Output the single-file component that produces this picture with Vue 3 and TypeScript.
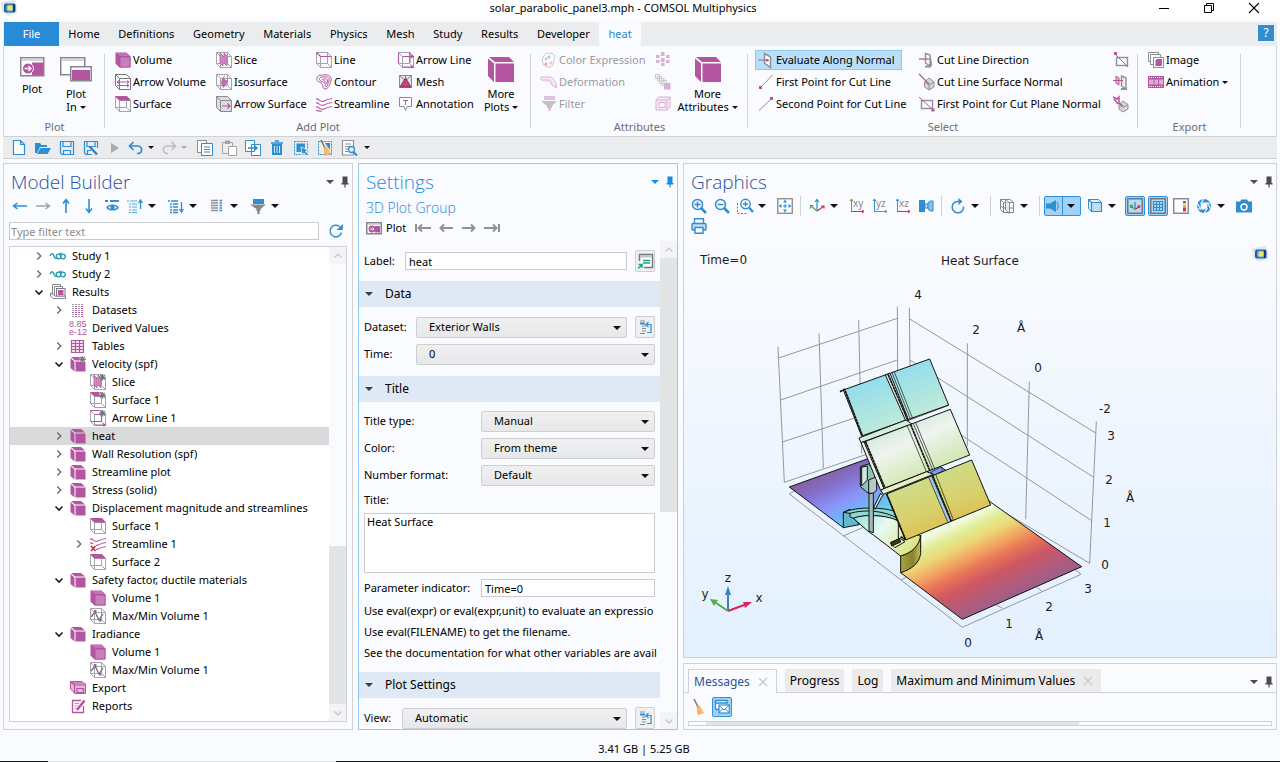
<script setup lang="ts">
import { h, ref } from 'vue'

const M = '#b455a0'
const G = '#8f9094'
const B = '#2f8dd0'

const wire = `<path d="M.5 .5H11.5L15.5 4.5V15.5H4.5L.5 11.5ZM.5 .5L4.5 4.5H15.5M4.5 4.5V15.5M11.5 .5V11.5H.5M11.5 11.5L15.5 15.5" fill="none" stroke="#a4a5a8"/>`
const solid = `<path d="M1 1H11L15 4.5H5ZM.5 2L4.5 5.5V15.5L.5 12ZM5.5 5.5H15.5V15.5H5.5Z" fill="${M}"/>`
const star = `<path d="M12.500 0V6.500M9.300 3.300H15.800M10.200 1L14.800 5.600M14.800 1L10.200 5.600" stroke="#77787c" stroke-width="1.200"/>`
const waves = `<path d="M0 3C3 2 4 7 8 5S12 3 16 2.500M0 7C3 6 4 11 8 9S12 7 16 6.500M0 11C3 10 4 15 8 13S12 11 16 10.500M0 14.500C2 14 4 16 6 15" fill="none" stroke="${M}" stroke-width="1.100"/>`
const page = (x: number, y: number, c: string, w = 9, hh = 11) => `<rect x="${x}.5" y="${y}.5" width="${w}" height="${hh}" fill="#fafbff" stroke="${c}"/>`
const zoomGlass = `<circle cx="6.500" cy="6.500" r="5" fill="none" stroke="${B}" stroke-width="1.500"/><path d="M10 10L15 15" stroke="${B}" stroke-width="2.500"/>`
const plane = (a: string, b: string) => `<path d="M2.500 14V1M1 3L2.500 1L4 3" fill="none" stroke="${a}"/><path d="M2.500 13.500H15M13 12L15 13.500L13 15" fill="none" stroke="${b}"/>`
const letter = (t: string) => `<text x="4" y="9" font-family="Noto Sans, sans-serif" font-size="10" fill="#8a8a8e">${t}</text>`
const axes3 = `<path d="M8 12V2M6 4L8 1.500L10 4" fill="none" stroke="${B}" stroke-width="1.200"/><path d="M8 13L2 8M1.500 10.500V7.500H4.500" fill="none" stroke="#4da84a" stroke-width="1.200"/><path d="M8 13L14.500 8.500M12 8H15V10.500" fill="none" stroke="#d8285c" stroke-width="1.200"/>`
const broom = `<path d="M4 0L8 8" stroke="#77787c" stroke-width="1.600"/><path d="M6.500 7L9.500 6.500L14 14L8 16Z" fill="#f2a74b"/><path d="M8 9L11 15M9.500 8L12.500 14" stroke="#fbd79c" stroke-width=".8"/>`
const logo = `<path d="M0 2.500L5 1L14 0L16 6V13L7 16L1 12Z" fill="#e3e5ea"/><rect x="3" y="3.500" width="11.500" height="9" rx="2" fill="#2257b4"/><rect x="5" y="4.500" width="8" height="7" rx="2" fill="#49b5c8"/><rect x="6.500" y="5.500" width="5" height="5" rx="1.500" fill="#f2e35a"/><path d="M12 4H14V12H12Z" fill="#153a80"/>`

const icons: Record<string, string> = {
  volume: `<path d="M.5 .5H11.500L15.500 4.500V15.500H4.500L.5 11.500Z" fill="${M}"/><path d="M5 5H15V15H5Z" fill="#c780b9" stroke="${M}"/><path d="M2 1L11.300 1L14 4H5Z" fill="#c275b3"/>`,
  arrowVolume: `<path d="M.5 .5H11.500L15.500 4.500V15.500H4.500L.5 11.500ZM.5 .5L4.500 4.500H15.500M4.500 4.500V15.500" fill="none" stroke="#77787c"/><path d="M2 8H14M2 11.500H14M12 6.500L14 8L12 9.500M12 10L14 11.500L12 13M4 6.500L2 8L4 9.500" fill="none" stroke="${M}"/>`,
  surface: `${wire}<path d="M0 0H12L16 4.500H4.500Z" fill="${M}"/>`,
  slice: `${wire}<path d="M4 1L7 4V14L4 11ZM8 1L11 4V14L8 11Z" fill="#cf8fc3" stroke="${M}" stroke-width=".8"/>`,
  isosurface: `${wire}<path d="M9 1L8 5L12 7L10 11L7 14L5 9L6 5Z" fill="${M}" opacity=".85"/>`,
  arrowSurface: `<path d="M.5 .5H11.500L15.500 4.500V15.500H4.500L.5 11.500Z" fill="#dcdde0" stroke="#8a8b8f"/><path d="M.5 .5L4.500 4.500H15.500M4.500 4.500V15.500" fill="none" stroke="#8a8b8f"/><path d="M6 10H14M11.500 7.500L14 10L11.500 12.500" fill="none" stroke="${M}" stroke-width="1.200"/>`,
  line: `${wire}<path d="M.5 .5L4.500 4.500H15.500" fill="none" stroke="${M}" stroke-width="1.200"/>`,
  contour: `<path d="M8 1C13 0 16 3 15 7S12 15 9 15S8 11 5 9S0 7 1 4S4 1 8 1ZM8 3C12 2 14 4 13 7S11 13 10 13S10 9 7 8S3 6 3.500 4.500S5 3 8 3ZM8 5C10 4.500 12 5 11.500 7S11 10 10.500 10S10 7.500 8 6.500S6 5.500 8 5Z" fill="none" stroke="${M}"/>`,
  streamline: waves,
  arrowLine: `${wire}<path d="M.5 1V11M4.500 4.500H15M4.500 15H15M13 3L15.500 4.500L13 6M13 13.500L15.500 15L13 16M12 0V11" fill="none" stroke="${M}" stroke-width="1.100"/>`,
  mesh: `<rect x="1.500" y="1.500" width="12" height="12" fill="#e3e3e6" stroke="#8a8b8f"/><path d="M1.500 1.500L7.500 7L13.500 1.500M7.500 1.500V7" fill="none" stroke="#8a8b8f"/><path d="M7.500 4L13 13H2Z" fill="#c8447e" stroke="#8e2f60"/>`,
  annotation: `<path d="M1.500 1.500H13.500V10.500H9L7.500 14.500L6 10.500H1.500Z" fill="#fff" stroke="#8a8b8f"/><path d="M5 4.500H10M7.500 4.500V9" stroke="${M}" fill="none"/>`,
  bigCube: `<path d="M1 0H21L26 5H7ZM0 1.500L6 6.500V25L0 19ZM7.500 6.500H26V25H7.500Z" fill="${M}"/>`,
  plotBig: `<rect x=".75" y=".75" width="23" height="18" fill="#fff" stroke="#85868a" stroke-width="1.500"/><path d="M1.500 1.500H23V4H1.500Z" fill="#d4d5d8"/><path d="M12 5.500H23V18H12Z" fill="${M}"/><circle cx="8" cy="11.500" r="5.500" fill="${M}" stroke="#fff"/><path d="M4.500 11.500H11M8.500 9L11 11.500L8.500 14" fill="none" stroke="#fff" stroke-width="1.300"/>`,
  plotIn: `<rect x=".75" y=".75" width="24" height="17" fill="#fff" stroke="#85868a" stroke-width="1.500"/><path d="M1.500 1.500H24V4H1.500Z" fill="#d4d5d8"/><rect x="10.750" y="9.750" width="20.500" height="14" fill="#fff" stroke="#85868a" stroke-width="1.500"/><path d="M12 13H30V23H12Z" fill="${M}"/>`,
  palette: `<path d="M8 1C13 1 15 4 13 7C12 9 14 11 11 14C7 17 1 14 1.500 8C2 4 4 1 8 1Z" fill="#fafafa" stroke="#8f9094"/><circle cx="8" cy="5" r="1.500" fill="#3f8fd0"/><circle cx="5" cy="7" r="1.300" fill="#888"/><circle cx="5" cy="12" r="1.500" fill="#d33"/><circle cx="10" cy="11" r="1.500" fill="#e9903a"/>`,
  deform: `<path d="M0 3H9C13 4 15 8 15.500 14M0 6H8C10 7 11 10 11 11L15.500 14M0 3V6" fill="#f3d9ee" stroke="${M}"/>`,
  filterG: `<path d="M3 0H14V4H3Z" fill="${M}" opacity=".8"/><path d="M0 5H16L11 10V12H6V10Z" fill="#7d7e82"/><path d="M8.500 12V15" stroke="${M}" stroke-width="2"/>`,
  grid3: `<path d="M6 0H9.500V4H6ZM1 3H4.500V6H1ZM11 3H14.500V6H11ZM6 6H9.500V10H6ZM1 8H4.500V11H1ZM11 8H14.500V11H11ZM6 11H9.500V14H6Z" fill="${M}"/>`,
  stack: `<path d="M.5 .5H4.500V4.500H.5ZM2.500 2.500H6.500V7H2.500ZM4.500 4.500H9V9.500H4.500ZM7 6.500H11.500V11.500H7Z" fill="#eee" stroke="#8a8b8f"/><path d="M9 9H15.500V15.500H9Z" fill="${M}"/>`,
  boxes: `<path d="M1 4L4 1H15V11L12 14H1ZM1 4H12V14M12 4L15 1" fill="#f1d8ec" stroke="${M}"/><rect x="4" y="6.500" width="6" height="5" fill="#fff" stroke="${M}"/>`,
  normal: `<path d="M6.500 1.500L12.500 5V15.500L6.500 11Z" fill="#fff" stroke="${G}" stroke-width="1.500"/><path d="M0 8H8" stroke="#77787c"/><path d="M8 7H10.500V9.500H8Z" fill="${M}"/>`,
  first: `<path d="M3 13L14.500 1" stroke="${G}"/><path d="M1 12H4V15H1Z" fill="${M}"/>`,
  second: `<path d="M1 14.500L13 3" stroke="${G}"/><path d="M12 1H15V4H12Z" fill="${M}"/>`,
  dir: `<path d="M6.500 1.500L11 3V14L6.500 11ZM11 3L12.500 14" fill="#fff" stroke="${G}" stroke-width="1.400"/><path d="M0 7H10" stroke="${M}" stroke-width="1.300"/><path d="M6 14.500H12" stroke="${G}" stroke-width="2"/>`,
  surfN: `<path d="M10 4L15 8V13L10 16L5.500 13V8Z" fill="#d6d7da" stroke="${G}"/><path d="M5.500 8L10 11L15 8M10 11V16" stroke="${G}" fill="none"/><path d="M0 0L10 10" stroke="${M}" stroke-width="1.300"/>`,
  planeN: `<rect x="2.500" y="4.500" width="11" height="8" fill="none" stroke="${G}" stroke-width="1.400"/><path d="M0 1L14 14" stroke="${M}"/><path d="M12.500 12.500H15.500V15.500H12.500Z" fill="${M}"/>`,
  planeA: `<rect x="3.500" y="5.500" width="11" height="8" fill="none" stroke="${G}" stroke-width="1.400"/><path d="M2 2L15 15" stroke="${M}"/><path d="M1 0H4V3H1Z" fill="${M}"/>`,
  planeB: `<path d="M8.500 2L13 4V15L8.500 12Z" fill="#eee" stroke="${G}" stroke-width="1.400"/><path d="M3 2L6 4V11L3 9ZM0 6.500H10" stroke="${M}" fill="#e3b5da"/><path d="M8 15H14" stroke="${G}" stroke-width="2"/>`,
  planeC: `<path d="M10 5L15 8.500V13L10 16L6 13V8.500Z" fill="#d6d7da" stroke="${G}"/><path d="M6 8.500L10 11.500L15 8.500" stroke="${G}" fill="none"/><path d="M0 1L4 3L6 1V7L10 10M1 3L5 8" fill="none" stroke="${M}" stroke-width="1.500"/>`,
  image: `${page(0, 0, G, 10, 9)}${page(2, 2, G, 10, 10)}${page(5, 5, G, 10, 10)}<path d="M7.500 8L9 7H14V13L12.500 14H7.500Z" fill="${M}"/>`,
  film: `<path d="M0 2H16V14H0Z" fill="${M}"/><path d="M1 5.500H5.500V10.500H1ZM6.500 5.500H10V10.500H6.500ZM11 5.500H15V10.500H11Z" fill="#dcb0d3"/><path d="M1 3.500H15M1 12.500H15" stroke="#fff" stroke-dasharray="1 1"/>`,
  newF: `<path d="M2.500 .5H9.500L13.500 4.500V14.500H2.500ZM9.500 .5V4.500H13.500" fill="#fff" stroke="${B}" stroke-width="1.200"/>`,
  open: `<path d="M0 3H5L6.500 5H12V7H5L2 13H0Z" fill="${B}"/><path d="M5.500 8H16L12.500 14H2Z" fill="${B}"/>`,
  save: `<path d="M1.500 1.500H14.500V14.500H3L1.500 13ZM4 1.500V6.500H12V1.500M4.500 14V10.500H11.500V14" fill="none" stroke="${B}" stroke-width="1.200"/>`,
  saveAs: `<path d="M14.500 8V1.500H1.500V13L3 14.500H9M4 1.500V6.500H12V1.500M4.500 14V10.500H8" fill="none" stroke="${B}" stroke-width="1.200"/><path d="M6.500 6.500L14 14.500" stroke="#3f7fb0" stroke-width="2.500"/>`,
  play: `<path d="M4 3L12 8L4 13Z" fill="#a9aaad"/>`,
  undo: `<path d="M1.500 6H10C15 6 15 14 9 13.500M5.500 2L1.500 6L5.500 10" fill="none" stroke="${B}" stroke-width="1.700"/>`,
  redo: `<path d="M14.500 6H6C1 6 1 14 7 13.500M10.500 2L14.500 6L10.500 10" fill="none" stroke="#bbbcc0" stroke-width="1.500"/>`,
  copy: `${page(0, 0, G, 9, 12)}<path d="M4.500 3.500H15.500V15.500H4.500Z" fill="#fff" stroke="${B}"/><path d="M7 7H13M7 9.500H13M7 12H13" stroke="${B}"/>`,
  paste: `<path d="M1.500 2.500H11.500V13.500H1.500Z" fill="#eee" stroke="#a2a3a6"/><path d="M4 .5H9V4H4Z" fill="#a2a3a6"/><path d="M7.500 6.500H15.500V15.500H7.500Z" fill="#fff" stroke="#a2a3a6"/>`,
  dup: `<path d="M.5 .5H9.500V11.500H.5ZM6.500 4.500H15.500V15.500H6.500Z" fill="#fff" stroke="${B}"/><path d="M3 8H12M9 5.500L12 8L9 10.500" fill="none" stroke="${B}" stroke-width="1.600"/>`,
  trash: `<path d="M3 4H13V15H3Z" fill="${B}"/><path d="M2 3H14M6 1H10" stroke="${B}" stroke-width="1.600"/><path d="M5.500 6V13M8 6V13M10.500 6V13" stroke="#cfe4f5"/>`,
  sel: `<rect x="1.500" y="1.500" width="13" height="13" fill="none" stroke="${B}" stroke-dasharray="2 1"/><path d="M3.500 3.500H12V12H3.500Z" fill="${B}"/><path d="M8 7L9 15L11 13L14 16L15.500 14.500L12.500 11.500L15 10Z" fill="${B}" stroke="#fff" stroke-width=".7"/>`,
  clear: `<rect x="1.500" y="1.500" width="13" height="13" fill="none" stroke="${B}" stroke-dasharray="2 1"/><path d="M8 3H13V10Z" fill="${B}"/>${broom}`,
  find: `<path d="M1.500 .5H12.500V15H1.500Z" fill="#fff" stroke="${G}" stroke-width="1.200"/><path d="M4 4H10M4 6.500H9M4 9H7M4 11.500H7" stroke="${G}"/><circle cx="10.500" cy="9.500" r="3" fill="#e6f1fb" stroke="${B}" stroke-width="1.300"/><path d="M12.500 12L16 15.500" stroke="${B}" stroke-width="2"/>`,
  left: `<path d="M1 8H15M5.500 5L1.500 8L5.500 11" fill="none" stroke="${B}" stroke-width="1.500"/>`,
  right: `<path d="M1 8H15M10.500 5L14.500 8L10.500 11" fill="none" stroke="#a3a4a8" stroke-width="1.500"/>`,
  up: `<path d="M8 15V2M5 5.500L8 1.500L11 5.500" fill="none" stroke="${B}" stroke-width="1.600"/>`,
  down: `<path d="M8 1V14M5 10.500L8 14.500L11 10.500" fill="none" stroke="${B}" stroke-width="1.600"/>`,
  eye: `<path d="M1 3H4M6 3H15" stroke="${B}" stroke-width="1.800"/><path d="M3 9.500C5 6.500 12 6.500 14 9.500C12 12.500 5 12.500 3 9.500Z" fill="none" stroke="${B}" stroke-width="1.400"/><circle cx="8.500" cy="9.500" r="2" fill="${B}"/>`,
  listUp: `<path d="M0 3H2M3 3H10M2 6H4M5 6H10M2 9H4M5 9H10M2 12H4M5 12H10M2 14.500H4M5 14.500H10" stroke="${B}" stroke-width="1.200" opacity=".8"/><path d="M13.500 11V3M11.500 5L13.500 2L15.500 5" fill="none" stroke="${B}" stroke-width="1.300"/>`,
  listDown: `<path d="M0 3H2M3 3H10M2 6H4M5 6H10M2 9H4M5 9H10M2 12H4M5 12H10M2 14.500H4M5 14.500H10" stroke="${B}" stroke-width="1.300"/><path d="M13.500 4V13M11.500 11L13.500 14L15.500 11" fill="none" stroke="${B}" stroke-width="1.300"/>`,
  columns: `<path d="M2 2.500H9M2 5H9M2 7.500H9M2 10H9M2 12.500H9" stroke="#8f9094" stroke-width="1.400"/><path d="M10.500 2.500H13M10.500 5H13M10.500 7.500H13M10.500 10H13M10.500 12.500H13" stroke="${B}" stroke-width="1.400"/>`,
  funnel: `<path d="M3 1H14V6H3Z" fill="${B}"/><path d="M0 6.500H16L10.500 11V13H6.500V11Z" fill="#86878b"/><path d="M8.500 13V16" stroke="${B}" stroke-width="2"/>`,
  refresh: `<path d="M13.500 9.500A5.800 5.800 0 1 1 11.500 3.500" fill="none" stroke="${B}" stroke-width="1.500"/><path d="M14.800 1V7H8.500Z" fill="${B}"/>`,
  study: `<path d="M0 8C1.500 5 3 5 4 8S6 11 7 9" fill="none" stroke="#2596b4" stroke-width="1.300"/><circle cx="8.500" cy="8.500" r="2.300" fill="none" stroke="#2596b4" stroke-width="1.300"/><circle cx="13" cy="8.500" r="2.300" fill="none" stroke="#2596b4" stroke-width="1.300"/><path d="M9 5.500L12 5" stroke="#2596b4"/>`,
  results: `<path d="M.5 9V12L3 14.500H15.500V12H5L.5 9" fill="none" stroke="#85868a"/><path d="M2.500 10V.5H10.500V2M4.500 11V2.500H12.500V4" fill="none" stroke="#85868a"/><rect x="6.500" y="4.500" width="8.500" height="7.500" fill="#fff" stroke="#77787c"/><path d="M8 6H13.500V11H8Z" fill="${M}"/>`,
  datasets: `<path d="M3 2V15M6 2V15M9 2V15M12 2V15" stroke="#9a9b9f" stroke-width="2" stroke-dasharray="1 1"/><path d="M6 4V15M12 4V15" stroke="${M}" stroke-width="2" stroke-dasharray="1 1"/><path d="M2 10.500H13" stroke="${M}" stroke-dasharray="2 1"/>`,
  derived: `<text x="-1" y="7" font-family="Liberation Sans, sans-serif" font-size="9" fill="${M}">8.85</text><text x="-1" y="15" font-family="Liberation Sans, sans-serif" font-size="9" fill="${M}">e-12</text>`,
  table: `<path d="M1.500 2.500H13.500V14.500H1.500ZM1.500 5.500H13.500M1.500 8.500H13.500M1.500 11.500H13.500M5.500 2.500V14.500M9.500 2.500V14.500" fill="#f4e4f1" stroke="${M}" stroke-width="1.200"/>`,
  cube: solid,
  cubeStar: solid + `<rect x="9.500" y="0" width="6.500" height="6" fill="#fff" opacity=".7"/>` + star,
  sliceStar: `${wire}<path d="M4 1L7 4V14L4 11ZM8 1L11 4V14L8 11Z" fill="#cf8fc3" stroke="${M}" stroke-width=".8"/>${star}`,
  surfStar: `${wire}<path d="M0 0H9L10 4.500H4.500Z" fill="${M}"/>${star}`,
  lineStar: `${wire}<path d="M.5 .5H9M4.500 4.500H10M.5 11.500H11.500V6M4.500 15H15M13 13.500L15.500 15L13 16" fill="none" stroke="${M}" stroke-width="1.100"/>${star}`,
  streamX: waves + `<path d="M0 8H6V16H0Z" fill="#fff"/><path d="M1 10L5.500 15M5.500 10L1 15" stroke="#d2262f" stroke-width="1.500"/>`,
  maxmin: `${wire}<path d="M1 9L5 4L9 12L13 6" fill="none" stroke="#6f7074" stroke-width="1.300"/><path d="M4 2H6.500V4.500H4ZM9 11H11.500V13.500H9Z" fill="${M}"/>`,
  export: `<path d="M.5 1.500H11.500L15.500 4V13.500H5L.5 9Z" fill="#e3b9da" stroke="${M}"/><path d="M.5 1.500L4.500 5H15.500M4.500 5V13.500M3 3H13M7 8.500H13.500V12.500H7Z" fill="none" stroke="${M}" stroke-width="1.200"/>`,
  report: `<path d="M13.500 8V14.500H2.500V2.500H11" fill="#fff" stroke="${M}" stroke-width="1.300"/><path d="M4.500 5.500H9M4.500 8H8M4.500 10.500H6.500" stroke="#c98abd"/><path d="M14.500 2.500L7 12" stroke="${M}" stroke-width="2.500"/>`,
  plotS: `<rect x=".75" y="2.750" width="14.500" height="11" fill="#fff" stroke="#85868a" stroke-width="1.500"/><path d="M2 4H14V5H2Z" fill="#d4d5d8"/><path d="M9 6H14V12.500H9Z" fill="${M}"/><circle cx="6" cy="9" r="3.500" fill="${M}"/><path d="M4 9H8M6.500 7.500L8 9L6.500 10.500" fill="none" stroke="#fff"/>`,
  goFirst: `<path d="M1 4V12M3 8H16M7 4.500L3.500 8L7 11.500" fill="none" stroke="#909194" stroke-width="2"/>`,
  goPrev: `<path d="M2 8H15M6 4.500L2.500 8L6 11.500" fill="none" stroke="#909194" stroke-width="2"/>`,
  goNext: `<path d="M1 8H14M10 4.500L13.500 8L10 11.500" fill="none" stroke="#909194" stroke-width="2"/>`,
  goLast: `<path d="M15 4V12M0 8H13M9 4.500L12.500 8L9 11.500" fill="none" stroke="#909194" stroke-width="2"/>`,
  rename: `<path d="M2.500 8V1.500H15.500V14.500H7" fill="#fff" stroke="#77787c" stroke-width="1.500"/><path d="M3 2H15V4.500H3Z" fill="#c4c5c8"/><path d="M6 7.500H13M6 10H13" stroke="#17a28a" stroke-width="1.400"/><path d="M1 15.500L4.500 12M1.500 11.500H5V15" fill="none" stroke="#17a28a" stroke-width="1.400"/>`,
  goTo: `<path d="M3 2H8M5 7H9M5 9.500H9M5 12H9M3 14.500H8" stroke="#8a8b8f" stroke-width="1.200"/><path d="M3 4.500H8" stroke="${B}" stroke-width="2"/><path d="M9 5.500H14V13.500H10M11.500 3L9 5.500L11.500 8" fill="none" stroke="${B}" stroke-width="1.200"/>`,
  zin: zoomGlass + `<path d="M3.500 6.500H9.500M6.500 3.500V9.500" stroke="${B}" stroke-width="1.500"/>`,
  zout: zoomGlass + `<path d="M3.500 6.500H9.500" stroke="${B}" stroke-width="1.500"/>`,
  zbox: `<path d="M.5 5V15.500H11" fill="none" stroke="${B}" stroke-dasharray="2 1.500"/><circle cx="8.500" cy="6" r="4.700" fill="none" stroke="${B}" stroke-width="1.400"/><path d="M12 9.500L16 14" stroke="${B}" stroke-width="2.300"/><path d="M6 6H11M8.500 3.500V8.500" stroke="${B}" stroke-width="1.300"/>`,
  fit: `<rect x=".75" y=".75" width="14.500" height="14.500" fill="#fff" stroke="#85868a" stroke-width="1.300"/><path d="M6 8H10M8 6V10" stroke="${B}"/><path d="M8 1.500L10 4.500H6ZM8 14.500L10 11.500H6ZM1.500 8L4.500 6V10ZM14.500 8L11.500 6V10Z" fill="${B}"/>`,
  axes: axes3,
  xy: plane('#4da84a', '#d8285c') + letter('xy'),
  yz: plane(B, '#4da84a') + letter('yz'),
  xz: plane(B, '#d8285c') + letter('xz'),
  scene: `<path d="M1 2H7V14H1Z" fill="${B}"/><path d="M7 6H10V10H7Z" fill="#cfe4f5" stroke="${B}"/><path d="M10 5L12 3H15V13H12L10 11Z" fill="#8cbfe6" stroke="${B}"/>`,
  rotate: `<path d="M13.500 8.500A5.700 5.700 0 1 1 7 3.500H11" fill="none" stroke="${B}" stroke-width="1.500"/><path d="M8.500 0L12.500 3.500L8.500 7Z" fill="${B}"/>`,
  clip: `<path d="M1.500 1.500H11L14.500 4.500V14.500H4.500L1.500 11.500ZM1.500 1.500L4.500 4.500H14.500M4.500 4.500V14.500M1.500 8L4.500 10H14.500" fill="none" stroke="#85868a"/><path d="M6.500 1V12L10.500 15.500V5Z" fill="#dcebf8" stroke="${B}" opacity=".8"/>`,
  mega: `<path d="M0 5.500H4L10 2V14L4 10.500H0Z" fill="${B}"/><path d="M11 4C12.500 6 12.500 10 11 12" fill="none" stroke="${B}"/>`,
  transp: `<path d="M1.500 1.500H11.500L14.500 4.500V13.500H4.500L1.500 10.500Z" fill="#e4f0fa" stroke="${B}"/><path d="M4.500 4.500H14.500V13.500H4.500ZM1.500 1.500L4.500 4.500" fill="#c2dcf2" stroke="${B}" stroke-width="1.200"/>`,
  axisBox: `<rect x=".75" y=".75" width="14.500" height="14.500" fill="#b8d9f3" stroke="#6f7074" stroke-width="1.400"/><path d="M8 11V4" stroke="${B}" stroke-width="1.300"/><path d="M8 11.500L4 8M3.500 10V7.500H6" fill="none" stroke="#4da84a" stroke-width="1.300"/><path d="M8 11.500L12.500 8.500M10.500 8H12.500V10" fill="none" stroke="#d8285c" stroke-width="1.300"/>`,
  gridBox: `<rect x=".75" y=".75" width="14.500" height="14.500" fill="#b8d9f3" stroke="#6f7074" stroke-width="1.400"/><path d="M3.500 3.500H12.500V12.500H3.500ZM6.500 3.500V12.500M9.500 3.500V12.500M3.500 6.500H12.500M3.500 9.500H12.500" fill="none" stroke="${B}" stroke-width="1.200"/>`,
  legend: `<rect x=".75" y=".75" width="14.500" height="14.500" fill="#fff" stroke="#85868a" stroke-width="1.400"/><path d="M10 3H13V5H10Z" fill="#4a74c8"/><path d="M10 5H13V7.500H10Z" fill="#f0dc50"/><path d="M10 7.500H13V10H10Z" fill="#ef9440"/><path d="M10 10H13V13.500H10Z" fill="#d9354a"/>`,
  aperture: `<circle cx="8" cy="8" r="5.200" fill="none" stroke="${B}" stroke-width="3.600"/><path d="M8 .5L4.500 6M15 5H8.500M15 11L11.500 5.500M8 15.500L11.500 10M1 11H7.500M1 5L4.500 10.500" stroke="#fafbff" stroke-width="1.200"/>`,
  camera: `<path d="M0 3.500H4L5.500 1.500H11L12.500 3.500H16V14.500H0Z" fill="${B}"/><circle cx="8" cy="9" r="3" fill="${B}" stroke="#fff" stroke-width="1.400"/>`,
  print: `<path d="M3.500 6V.75H12.500V6" fill="#fff" stroke="${B}" stroke-width="1.400"/><rect x="1" y="5.500" width="14" height="6.500" rx="1" fill="#c2dcf2" stroke="${B}" stroke-width="1.400"/><path d="M4 9.500H12V15.300H4Z" fill="#fff" stroke="${B}" stroke-width="1.400"/>`,
  broom,
  mail: `<path d="M1.500 10.500V1.500H13V5M1.500 4H13" fill="#fff" stroke="${B}" stroke-width="1.300"/><path d="M1.500 10.500H5" stroke="${B}" stroke-width="1.300"/><rect x="5" y="6" width="10.300" height="8" fill="#fff" stroke="${B}" stroke-width="1.200"/><path d="M5 6.500L10 11L15 6.500M5 13.500L8.500 10M15 13.500L11.500 10" fill="none" stroke="${B}"/>`,
  menu: `<path d="M4 6H12L8 10Z" fill="currentColor"/>`,
  pin: `<path d="M5.500 2.500H10.500V9H11.500V10.500H4.500V9H5.500Z" fill="currentColor"/><path d="M8 10V13.500" stroke="currentColor" stroke-width="1.200"/>`,
  closed: `<path d="M6.300 4.500L9.800 8L6.300 11.500" fill="none" stroke="#66676b" stroke-width="1.300"/>`,
  opened: `<path d="M4.500 6.500L8 10L11.500 6.500" fill="none" stroke="#1c1c1e" stroke-width="1.600"/>`,
  chevUp: `<path d="M4.500 9.500L8 6L11.500 9.500" fill="none" stroke="#c2c3c7" stroke-width="1.200"/>`,
  chevDown: `<path d="M4.500 6.500L8 10L11.500 6.500" fill="none" stroke="#c2c3c7" stroke-width="1.200"/>`,
  logo,
  min: `<path d="M3 8.500H13" stroke="#000"/>`,
  restore: `<path d="M3.500 5.500H10.500V12.500H3.500ZM5.500 5.500V3.500H12.500V10.500H10.500" fill="none" stroke="#000"/>`,
  close: `<path d="M3 3L13 13M13 3L3 13" stroke="#000" stroke-width="1.100"/>`,
  x: `<path d="M4 4L12 12M12 4L4 12" stroke="#c3cad6" stroke-width="1.300"/>`,
}

const Ic = (p: { n: string; w?: number; t?: number }) =>
  h('svg', {
    class: 'ic',
    width: p.w ?? 16,
    height: p.t ?? p.w ?? 16,
    viewBox: `0 0 ${p.w ?? 16} ${p.t ?? p.w ?? 16}`,
    'aria-hidden': 'true',
    innerHTML: icons[p.n],
  })
Ic.props = ['n', 'w', 't']

const tabs = ['Home', 'Definitions', 'Geometry', 'Materials', 'Physics', 'Mesh', 'Study', 'Results', 'Developer', 'heat']

type Item = [icon: string, label: string]
const addPlot: Item[] = [
  ['volume', 'Volume'], ['arrowVolume', 'Arrow Volume'], ['surface', 'Surface'],
  ['slice', 'Slice'], ['isosurface', 'Isosurface'], ['arrowSurface', 'Arrow Surface'],
  ['line', 'Line'], ['contour', 'Contour'], ['streamline', 'Streamline'],
  ['arrowLine', 'Arrow Line'], ['mesh', 'Mesh'], ['annotation', 'Annotation'],
]
const attributes: Item[] = [
  ['palette', 'Color Expression'], ['deform', 'Deformation'], ['filterG', 'Filter'],
  ['grid3', ''], ['stack', ''], ['boxes', ''],
]
const select: Item[] = [
  ['normal', 'Evaluate Along Normal'], ['first', 'First Point for Cut Line'], ['second', 'Second Point for Cut Line'],
  ['dir', 'Cut Line Direction'], ['surfN', 'Cut Line Surface Normal'], ['planeN', 'First Point for Cut Plane Normal'],
  ['planeA', ''], ['planeB', ''], ['planeC', ''],
]

// 'v' stands for the drop-down arrow of the icon before it, '|' for a separator.
const quick = ['newF', 'open', 'save', 'saveAs', 'play', 'undo', 'v', 'redo', 'v', 'copy', 'paste', 'dup', 'trash', 'sel', 'clear', 'find', 'v']
const builderTools = ['left', 'right', 'up', 'down', 'eye', 'listUp', 'v', 'listDown', 'v', 'columns', 'v', 'funnel', 'v']
const viewTools = ['zin', 'zout', 'zbox', 'v', 'fit', '|', 'axes', 'v', 'xy', 'yz', 'xz', 'scene', '|', 'rotate', 'v', '|', 'clip', 'v', '|', 'light', 'transp', 'v', 'axisBox', 'gridBox', 'legend', 'aperture', 'v', 'camera', 'print']

interface Row { level: number; icon: string; label: string; state?: 'open' | 'closed' }
const tree: Row[] = [
  { level: 1, icon: 'study', label: 'Study 1', state: 'closed' },
  { level: 1, icon: 'study', label: 'Study 2', state: 'closed' },
  { level: 1, icon: 'results', label: 'Results', state: 'open' },
  { level: 2, icon: 'datasets', label: 'Datasets', state: 'closed' },
  { level: 2, icon: 'derived', label: 'Derived Values' },
  { level: 2, icon: 'table', label: 'Tables', state: 'closed' },
  { level: 2, icon: 'cubeStar', label: 'Velocity (spf)', state: 'open' },
  { level: 3, icon: 'sliceStar', label: 'Slice' },
  { level: 3, icon: 'surfStar', label: 'Surface 1' },
  { level: 3, icon: 'lineStar', label: 'Arrow Line 1' },
  { level: 2, icon: 'cube', label: 'heat', state: 'closed' },
  { level: 2, icon: 'cube', label: 'Wall Resolution (spf)', state: 'closed' },
  { level: 2, icon: 'cube', label: 'Streamline plot', state: 'closed' },
  { level: 2, icon: 'cube', label: 'Stress (solid)', state: 'closed' },
  { level: 2, icon: 'cube', label: 'Displacement magnitude and streamlines', state: 'open' },
  { level: 3, icon: 'surface', label: 'Surface 1' },
  { level: 3, icon: 'streamX', label: 'Streamline 1', state: 'closed' },
  { level: 3, icon: 'surface', label: 'Surface 2' },
  { level: 2, icon: 'cube', label: 'Safety factor, ductile materials', state: 'open' },
  { level: 3, icon: 'volume', label: 'Volume 1' },
  { level: 3, icon: 'maxmin', label: 'Max/Min Volume 1' },
  { level: 2, icon: 'cube', label: 'Iradiance', state: 'open' },
  { level: 3, icon: 'volume', label: 'Volume 1' },
  { level: 3, icon: 'maxmin', label: 'Max/Min Volume 1' },
  { level: 2, icon: 'export', label: 'Export' },
  { level: 2, icon: 'report', label: 'Reports' },
]
const selected = ref('heat')
const label = ref('heat')
const title = ref('Heat Surface')
const indicator = ref('Time=0')
const filter = ref('')

const ticks: [number, number, string][] = [
  [918, 299, '4'], [976, 334, '2'], [1021, 332, 'Å'], [1038, 372, '0'], [1105, 413, '-2'],
  [1111, 440, '3'], [1109, 484, '2'], [1130, 502, 'Å'], [1107, 527, '1'], [1105, 569, '0'],
  [1088, 593, '3'], [1049, 611, '2'], [1009, 628, '1'], [1039, 640, 'Å'], [968, 647, '0'],
  [728, 582, 'z'], [705, 598, 'y'], [759, 602, 'x'],
]
</script>

<template>
  <div class="app">
    <header class="titlebar">
      <Ic n="logo" />
      <h1>solar_parabolic_panel3.mph - COMSOL Multiphysics</h1>
      <div class="wincontrols">
        <button aria-label="Minimize"><Ic n="min" /></button>
        <button aria-label="Restore"><Ic n="restore" /></button>
        <button aria-label="Close"><Ic n="close" /></button>
      </div>
    </header>

    <nav class="tabs">
      <button class="file">File</button>
      <div class="tablist">
        <button v-for="t in tabs" :key="t" :class="['tab', { on: t === 'heat' }]">{{ t }}</button>
      </div>
      <button class="help" aria-label="Help">?</button>
    </nav>

    <section class="ribbon">
      <div class="group g-plot">
        <div class="tools">
          <button class="big"><Ic n="plotBig" :w="25" :t="20" /><span>Plot</span></button>
          <button class="big"><Ic n="plotIn" :w="32" :t="25" /><span>Plot</span><span>In <i class="dd"></i></span></button>
        </div>
        <h2>Plot</h2>
      </div>
      <div class="group g-add">
        <div class="tools">
          <button v-for="[i, l] in addPlot" :key="l" class="small"><Ic :n="i" /><span>{{ l }}</span></button>
          <button class="big"><Ic n="bigCube" :w="26" :t="25" /><span>More</span><span>Plots <i class="dd"></i></span></button>
        </div>
        <h2>Add Plot</h2>
      </div>
      <div class="group g-attr">
        <div class="tools">
          <button v-for="[i, l] in attributes" :key="i" class="small" disabled :aria-label="l || i"><Ic :n="i" /><span>{{ l }}</span></button>
          <button class="big"><Ic n="bigCube" :w="26" :t="25" /><span>More</span><span>Attributes <i class="dd"></i></span></button>
        </div>
        <h2>Attributes</h2>
      </div>
      <div class="group g-sel">
        <div class="tools">
          <button v-for="[i, l] in select" :key="i" :class="['small', { pressed: i === 'normal' }]" :aria-label="l || i"><Ic :n="i" /><span>{{ l }}</span></button>
        </div>
        <h2>Select</h2>
      </div>
      <div class="group g-exp">
        <div class="tools">
          <button class="small"><Ic n="image" /><span>Image</span></button>
          <button class="small"><Ic n="film" /><span>Animation <i class="dd"></i></span></button>
        </div>
        <h2>Export</h2>
      </div>
    </section>

    <div class="quick" role="toolbar">
      <button v-for="(q, k) in quick" :key="k" :class="[q === 'v' ? 'drop' : 'tool', q, { dim: k === 8 }]" :aria-label="q"><Ic v-if="q !== 'v'" :n="q" /><i v-else class="dd"></i></button>
    </div>

    <main>
      <section class="panel builder">
        <div class="head">
          <h2>Model Builder</h2>
          <button aria-label="Menu"><Ic n="menu" /></button>
          <button aria-label="Pin"><Ic n="pin" /></button>
        </div>
        <div class="btools" role="toolbar">
          <button v-for="(q, k) in builderTools" :key="k" :class="q === 'v' ? 'drop' : 'tool'" :aria-label="q"><Ic v-if="q !== 'v'" :n="q" /><i v-else class="dd wide"></i></button>
        </div>
        <div class="filter">
          <input v-model="filter" type="text" placeholder="Type filter text" aria-label="Type filter text" />
          <button aria-label="Refresh"><Ic n="refresh" /></button>
        </div>
        <div class="treebox">
          <ul role="tree">
            <li v-for="(r, k) in tree" :key="k" role="treeitem" :class="['lv' + r.level, { sel: r.label === selected }]" @click="selected = r.label">
              <span class="exp"><Ic v-if="r.state" :n="r.state === 'open' ? 'opened' : 'closed'" /></span>
              <Ic :n="r.icon" />
              <span class="name">{{ r.label }}</span>
            </li>
          </ul>
          <div class="scroll">
            <button aria-label="Scroll up"><Ic n="chevUp" /></button>
            <div class="track"><div class="thumb low"></div></div>
            <button aria-label="Scroll down"><Ic n="chevDown" /></button>
          </div>
        </div>
      </section>

      <section class="panel settings">
        <div class="head blue">
          <h2>Settings</h2>
          <button aria-label="Menu"><Ic n="menu" /></button>
          <button aria-label="Pin"><Ic n="pin" /></button>
        </div>
        <h3>3D Plot Group</h3>
        <div class="stools">
          <button class="plot"><Ic n="plotS" /><span>Plot</span></button>
          <button aria-label="First"><Ic n="goFirst" /></button>
          <button aria-label="Previous"><Ic n="goPrev" /></button>
          <button aria-label="Next"><Ic n="goNext" /></button>
          <button aria-label="Last"><Ic n="goLast" /></button>
        </div>
        <div class="sbody">
          <div class="form">
            <div class="row r-label">
              <label for="f-label">Label:</label>
              <input id="f-label" v-model="label" type="text" />
              <button class="side" aria-label="Rename"><Ic n="rename" /></button>
            </div>
            <h4><Ic n="menu" />Data</h4>
            <div class="fields narrow">
              <div class="row">
                <label for="f-ds">Dataset:</label>
                <span class="sel-wrap"><select id="f-ds"><option>Exterior Walls</option></select></span>
                <button class="side" aria-label="Go to source"><Ic n="goTo" /></button>
              </div>
              <div class="row">
                <label for="f-time">Time:</label>
                <span class="sel-wrap"><select id="f-time"><option>0</option></select></span>
              </div>
            </div>
            <h4><Ic n="menu" />Title</h4>
            <div class="fields">
              <div class="row">
                <label for="f-tt">Title type:</label>
                <span class="sel-wrap"><select id="f-tt"><option>Manual</option></select></span>
              </div>
              <div class="row">
                <label for="f-col">Color:</label>
                <span class="sel-wrap"><select id="f-col"><option>From theme</option></select></span>
              </div>
              <div class="row">
                <label for="f-nf">Number format:</label>
                <span class="sel-wrap"><select id="f-nf"><option>Default</option></select></span>
              </div>
              <div class="stacked">
                <label for="f-title">Title:</label>
                <textarea id="f-title" v-model="title"></textarea>
              </div>
              <div class="row indicator">
                <label for="f-par">Parameter indicator:</label>
                <input id="f-par" v-model="indicator" type="text" />
              </div>
              <div class="hints">
                <p>Use eval(expr) or eval(expr,unit) to evaluate an expressio</p>
                <p>Use eval(FILENAME) to get the filename.</p>
                <p>See the documentation for what other variables are avail</p>
              </div>
            </div>
            <h4><Ic n="menu" />Plot Settings</h4>
            <div class="fields view">
              <div class="row">
                <label for="f-view">View:</label>
                <span class="sel-wrap"><select id="f-view"><option>Automatic</option></select></span>
                <button class="side" aria-label="Go to source"><Ic n="goTo" /></button>
              </div>
            </div>
          </div>
          <div class="scroll">
            <button aria-label="Scroll up"><Ic n="chevUp" /></button>
            <div class="track"><div class="thumb high"></div></div>
            <button aria-label="Scroll down"><Ic n="chevDown" /></button>
          </div>
        </div>
      </section>

      <div class="rightcol">
        <section class="panel graphics">
          <div class="head">
            <h2>Graphics</h2>
            <button aria-label="Menu"><Ic n="menu" /></button>
            <button aria-label="Pin"><Ic n="pin" /></button>
          </div>
          <div class="gtools" role="toolbar">
            <template v-for="(q, k) in viewTools" :key="k">
              <span v-if="q === '|'" class="vsep"></span>
              <button v-else-if="q === 'v'" class="drop" aria-label="Options"><i class="dd wide"></i></button>
              <button v-else-if="q === 'light'" class="light" aria-label="Scene light"><Ic n="mega" /><span><i class="dd wide"></i></span></button>
              <button v-else :class="['tool', { toggled: q === 'axisBox' || q === 'gridBox' }]" :aria-label="q"><Ic :n="q" /></button>
            </template>
          </div>
          <svg class="canvas" viewBox="684 238 592 417" preserveAspectRatio="xMidYMid meet">
            <defs>
              <linearGradient id="floor" gradientUnits="userSpaceOnUse" x1="88" y1="620" x2="342" y2="1151">
                <stop offset="0" stop-color="#86609f" /><stop offset=".09" stop-color="#8470cc" />
                <stop offset=".18" stop-color="#8c92fb" /><stop offset=".25" stop-color="#70b2f6" />
                <stop offset=".31" stop-color="#66d2ea" /><stop offset=".4" stop-color="#e0f7f0" />
                <stop offset=".53" stop-color="#f2fbe4" /><stop offset=".59" stop-color="#e0ed95" />
                <stop offset=".65" stop-color="#ecd878" /><stop offset=".72" stop-color="#f2a35f" />
                <stop offset=".78" stop-color="#e87558" /><stop offset=".85" stop-color="#cf5763" />
                <stop offset="1" stop-color="#9c5f8b" />
              </linearGradient>
              <linearGradient id="p1" gradientUnits="userSpaceOnUse" x1="360" y1="270" x2="430" y2="440">
                <stop offset="0" stop-color="#8edcee" /><stop offset="1" stop-color="#c2ebd7" />
              </linearGradient>
              <linearGradient id="p2" gradientUnits="userSpaceOnUse" x1="420" y1="430" x2="500" y2="600">
                <stop offset="0" stop-color="#d3ecdc" /><stop offset=".35" stop-color="#eff4ee" /><stop offset="1" stop-color="#cde5a8" />
              </linearGradient>
              <linearGradient id="p3" gradientUnits="userSpaceOnUse" x1="490" y1="580" x2="560" y2="750">
                <stop offset="0" stop-color="#ccde8c" /><stop offset=".6" stop-color="#d8d06c" /><stop offset="1" stop-color="#dfbf50" />
              </linearGradient>
              <linearGradient id="base" gradientUnits="userSpaceOnUse" x1="280" y1="700" x2="450" y2="830">
                <stop offset="0" stop-color="#8fdcd8" /><stop offset=".45" stop-color="#e8fbf1" /><stop offset="1" stop-color="#dbe27e" />
              </linearGradient>
              <linearGradient id="rim" gradientUnits="userSpaceOnUse" x1="422" y1="0" x2="482" y2="0">
                <stop offset="0" stop-color="#aaa63c" /><stop offset=".6" stop-color="#87832a" /><stop offset="1" stop-color="#c8c05a" />
              </linearGradient>
            </defs>
            <g transform="translate(760 280) scale(.33333)" stroke-linejoin="round">
              <path class="gridline" d="M54 200L73 607M177 160L190 565M296 120L305 520M412 80L413 290M56 234L412 115M62 360L412 240M68 486L290 412M73 607L320 523M448 83L450 265M622 190L622 500M808 305L797 718M1009 425L989 850M449 117L1007 459M450 240L1001 592M590 456L995 722M680 665L989 850M105 632L88 642L607 1042L963 883L945 868M250 768L310 742M424 899L438 892M709 975L728 985M832 923L848 935" />
              <path class="edge" fill="url(#floor)" d="M88 621L446 492L965 860L607 1018L422 878L482 800L460 690L300 700L250 743Z" />
              <path class="edge" fill="#62b8cf" d="M250 697L270 688L282 715L298 734L250 743Z" />
              <path class="edge" fill="#8ed8d8" d="M250 697C290 680 370 678 425 700L425 730C380 700 310 705 280 715L270 710V700Z" />
              <path class="edge" fill="url(#base)" d="M280 715C310 700 400 705 425 730L482 770C478 800 455 820 422 828L390 803L340 765L328 757Z" />
              <path class="edge" fill="none" d="M270 700C310 688 370 690 415 716M415 700V780M392 790L420 775L435 785L405 803Z" />
              <path class="edge" fill="url(#rim)" d="M422 828C455 820 480 795 482 765V820C478 850 455 868 422 878Z" />
              <path class="edge" fill="#3a3a20" d="M392 787L418 776L422 786L395 798Z" />
              <path class="edge" fill="#8fc4ba" d="M301 560L325 552L345 570V635L325 640L301 620Z" />
              <path class="edge" fill="#cfe9e0" d="M305 562L322 558V600L305 618Z" />
              <path class="edge" fill="#b6c8c8" d="M326 600L350 590V630L340 640H326Z" />
              <path class="edge" fill="#a9b8b6" d="M327 640H340V758L327 754Z" />
              <path class="edge" fill="#cfe3ec" d="M345 688L342 680L362 640L368 646Z" />
              <path class="edge" fill="url(#p1)" d="M250 330L509 237L566 375L305 468Z" />
              <path class="edge" fill="#e6f2f4" d="M376 285L390 280L446 421L438 424Z" />
              <path class="edge heavy" d="M240 335L254 328L307 467M384 283L444 422" />
              <path class="edge thin" d="M396 278L452 419M403 276L458 416M446 421L566 376" />
              <path class="edge" fill="#d3ecde" d="M297 474L438 420L456 432L303 488Z" />
              <path class="edge" fill="#e8f0ea" d="M303 488L316 484L372 625L362 632Z" />
              <path class="edge" fill="url(#p2)" d="M312 486L571 388L629 525L372 625Z" />
              <path class="edge heavy" d="M316 484L374 622M452 434L510 573" />
              <path class="edge thin" d="M442 438L500 577M460 431L518 569M467 428L524 566" />
              <path class="edge thin" fill="#7f9ff0" d="M512 578L540 562L550 572L522 586Z" />
              <path class="edge" fill="#e6eec2" d="M362 630L500 575L520 583L370 643Z" />
              <path class="edge" fill="url(#p3)" d="M380 642L635 540L692 675L437 780Z" />
              <path class="edge thin" fill="#9dcdec" d="M506 592L515 588L573 724L564 728Z" />
              <path class="edge thin" d="M527 583L581 722" />
              <path class="edge heavy" d="M380 642L437 780L422 770M518 587L574 724" />
            </g>
            <g class="triad">
              <path d="M728 611V594" stroke="#3f7fc4" /><path d="M728 586L725 595H731Z" fill="#3f7fc4" />
              <path d="M728 611L744 605" stroke="#e01f5e" /><path d="M752 602L743 602L745 608Z" fill="#e01f5e" />
              <path d="M728 611L716 603" stroke="#4fae46" /><path d="M710 599L718 600L714 606Z" fill="#4fae46" />
            </g>
            <text v-for="([x, y, t], k) in ticks" :key="k" :x="x" :y="y" text-anchor="middle">{{ t }}</text>
            <text x="700" y="264">Time=0</text>
            <text x="980" y="265" text-anchor="middle">Heat Surface</text>
            <g transform="translate(1252 246)" v-html="logo"></g>
          </svg>
        </section>

        <section class="panel messages">
          <div class="mtabs">
            <button class="mtab on">Messages <Ic n="x" /></button>
            <button class="mtab">Progress</button>
            <button class="mtab">Log</button>
            <button class="mtab">Maximum and Minimum Values <Ic n="x" /></button>
            <span class="grow"></span>
            <button class="hb" aria-label="Menu"><Ic n="menu" /></button>
            <button class="hb" aria-label="Pin"><Ic n="pin" /></button>
          </div>
          <div class="mtools">
            <button class="tool" aria-label="Clear"><Ic n="broom" /></button>
            <button class="tool pressed2" aria-label="Show messages"><Ic n="mail" /></button>
          </div>
          <div class="hscroll"><div></div></div>
        </section>
      </div>
    </main>

    <footer>3.41 GB | 5.25 GB</footer>
    <div class="taskline"><div></div></div>
  </div>
</template>

<style>
html, body { margin: 0; background: #fafbff; }
</style>

<style scoped>
.app {
  display: flex; flex-direction: column; min-height: 100vh; background: #fafbff; color: #000;
  font-family: "Noto Sans", "Open Sans", sans-serif; font-size: 11px; line-height: 16px;
}
* { box-sizing: border-box; }
button, input, select, textarea { font: inherit; color: inherit; margin: 0; }
button { background: none; border: 0; padding: 0; display: flex; align-items: center; justify-content: center; }
h1, h2, h3, h4, p, ul { margin: 0; padding: 0; font-weight: 400; font-size: inherit; }
.ic { display: block; flex: none; overflow: visible; }
.dd { display: inline-block; border: 3px solid transparent; border-top: 3px solid #111; border-bottom: 0; vertical-align: 2px; }
.dd.wide { border-width: 4px 4px 0; }
.dim .dd { border-top-color: #aaa; }

.titlebar { display: flex; align-items: center; height: 19px; background: #fff; padding: 0 4px 3px 1px; }
.titlebar h1 { flex: 1; text-align: center; padding-left: 88px; }
.wincontrols { display: flex; }
.wincontrols button { width: 45px; height: 16px; }

.tabs { display: flex; height: 24px; margin: 3px 3px 0; background: #ebecee; align-items: stretch; }
.file { width: 55px; margin-left: 1px; background: #288bd8; color: #fff; }
.tablist { display: flex; width: 582px; }
.tab { flex: 1 1 auto; padding: 0 9px; }
.tab.on { background: #fafbff; color: #2b86cb; }
.help { width: 16px; height: 16px; margin: 3px 3px 0 auto; background: #2f8dd0; color: #fff; font-size: 12px; }

.ribbon { display: flex; height: 91px; margin: 0 3px; border: 1px solid #d0d2d6; border-top: 0; padding-top: 3px; }
.group { display: flex; flex-direction: column; position: relative; }
.group::after { content: ""; position: absolute; right: 0; top: 5px; width: 1px; height: 74px; background: #cfd1d5; }
.group h2 { text-align: center; color: #6c6d70; line-height: 24px; }
.tools { display: grid; grid-template-rows: repeat(3, 22px); grid-auto-flow: column; height: 66px; }
.small { justify-content: flex-start; gap: 2px; height: 20px; margin-top: 1px; padding: 0 2px; border: 1px solid transparent; white-space: nowrap; justify-self: start; }
.small:disabled { opacity: .45; color: #222; }
.small.pressed { background: #b9dffb; border-color: #8fc8f2; padding-right: 6px; }
.big { grid-row: 1 / 4; flex-direction: column; justify-content: flex-start; padding-top: 8px; line-height: 13px; white-space: nowrap; }
.big .ic { margin-bottom: 5px; }
.g-plot { width: 101px; }
.g-plot .tools { grid-template-columns: 44px 44px; padding-left: 6px; }
.g-add { width: 426px; }
.g-add .tools { grid-template-columns: 101px 100px 82px 86px 40px; padding-left: 7px; }
.g-attr { width: 217px; }
.g-attr .tools { grid-template-columns: 114px 22px 67px; padding-left: 7px; }
.g-sel { width: 390px; }
.g-sel .tools { grid-template-columns: 161px 194px 22px; padding-left: 7px; }
.g-exp { width: 103px; }
.g-exp .tools { grid-template-columns: 1fr; padding-left: 7px; }

.quick { display: flex; height: 22px; margin: 0 3px; background: #ebecee; border-bottom: 1px solid #cfd1d5; padding-left: 4px; }
.quick .tool { width: 24px; }
.quick .undo, .quick .redo { width: 18px; }
.quick .drop { width: 12px; margin-right: 3px; }

main { flex: 1; display: grid; grid-template-columns: 350px 320px minmax(0, 1fr); gap: 5px; padding: 4px 3px 0; }
.panel { border: 1px solid #cfd1d5; display: flex; flex-direction: column; min-width: 0; }
.head { display: flex; align-items: center; height: 31px; padding: 4px 0 0 7px; color: #4a4b4f; }
.head h2 { flex: 1; font-family: "Open Sans", sans-serif; font-weight: 300; font-size: 19px; line-height: 24px; color: #2a5298; }
.head button { width: 15px; height: 16px; }
.head.blue, .head.blue h2 { color: #1c8ae0; }

.btools { display: flex; height: 22px; padding: 0 4px; }
.btools .tool { width: 23px; }
.btools .drop { width: 12px; margin-right: 6px; }
.filter { display: flex; gap: 8px; padding: 5px 7px 3px 5px; height: 26px; }
.filter input { flex: 1; border: 1px solid #c9cbcf; background: #fff; padding: 0 1px; height: 18px; outline: 0; min-width: 0; }
.filter input::placeholder { color: #8a8b8f; opacity: 1; }
.filter button { width: 18px; height: 18px; }
.treebox { flex: 1; display: flex; margin: 3px 5px 7px 5px; background: #fff; border: 1px solid #cfd1d5; }
.treebox ul { flex: 1; list-style: none; }
.treebox li { display: flex; align-items: center; height: 18px; white-space: nowrap; }
.treebox li.sel { background: #d9dadc; }
.exp { width: 20px; margin-right: 1px; display: flex; justify-content: center; }
.name { margin-left: 6px; }
.lv1 { padding-left: 19px; }
.lv2 { padding-left: 39px; }
.lv3 { padding-left: 59px; }
.scroll { width: 17px; display: flex; flex-direction: column; background: #fafbff; }
.scroll button { height: 17px; background: #f3f4f6; }
.track { flex: 1; display: flex; flex-direction: column; }
.thumb { background: #e3e4e6; }
.thumb.low { margin-top: auto; height: 36%; }
.thumb.high { height: 56%; }

.settings { border-color: #93c9f5; }
.settings h3 { font-family: "Open Sans", sans-serif; font-weight: 300; font-size: 14px; line-height: 18px; padding: 4px 7px 0; color: #1c8ae0; height: 22px; }
.stools { display: flex; height: 22px; margin-bottom: 2px; padding: 0 7px; }
.stools button { width: 23px; }
.stools .plot { width: 45px; gap: 4px; justify-content: flex-start; }
.sbody { flex: 1; display: flex; min-height: 0; }
.form { flex: 1; min-width: 0; overflow: hidden; }
.row { display: flex; align-items: center; height: 22px; }
.row label { flex: none; width: 117px; }
.row input { flex: 1; min-width: 0; height: 18px; border: 1px solid #c9cbcf; background: #fff; padding: 0 3px; }
.row.r-label { margin: 9px 5px; }
.row.r-label label { width: 41px; }
.side { width: 20px; height: 22px; margin-left: 8px; border: 1px solid #cdcfd2; border-radius: 2px; background: #eff0f1; }
.sel-wrap { position: relative; flex: 1; display: flex; min-width: 0; }
.sel-wrap::after { content: ""; position: absolute; right: 6px; top: 9px; border: 4px solid transparent; border-top-color: #111; border-bottom: 0; pointer-events: none; }
.sel-wrap select { appearance: none; width: 100%; height: 21px; border: 1px solid #cdcfd2; border-radius: 2px; background: linear-gradient(#f0f0f1, #e7e8e9); padding: 0 12px; }
h4 { display: flex; align-items: center; height: 26px; background: #dfe9f5; font-size: 12px; }
h4 .ic { margin: 0 8px 0 2px; color: #3c3d40; }
.fields { display: flex; flex-direction: column; gap: 5px; padding: 8px 5px; }
.fields.narrow { padding: 9px 5px 11px; }
.narrow .row label { width: 52px; }
.fields.view { padding: 9px 5px 0; }
.view .row label { width: 38px; }
.stacked { display: flex; flex-direction: column; }
.stacked label { line-height: 27px; margin-top: -5px; }
.stacked textarea { height: 60px; resize: none; border: 1px solid #c9cbcf; background: #fff; padding: 0 2px; display: block; }
.row.indicator { height: 20px; }
.hints { line-height: 21px; white-space: nowrap; margin-top: -3px; margin-bottom: 1px; }

.rightcol { display: flex; flex-direction: column; gap: 5px; min-width: 0; }
.graphics { flex: 1; background: linear-gradient(#fafbff 16%, #e3f0fe); }
.gtools { display: flex; flex-wrap: wrap; padding: 1px 0 0 3px; }
.gtools > * { height: 20px; }
.gtools .tool { width: 23px; }
.gtools .drop { width: 12px; margin-right: 5px; }
.vsep { width: 9px; border-left: 1px solid #cfd1d5; margin: 0 -4px 0 4px; }
.light { width: 37px; margin-right: 2px; background: #a3d2f8; border: 1px solid #2b93e6; border-radius: 2px; }
.light span { display: flex; align-items: center; justify-content: center; height: 100%; width: 17px; border-left: 1px solid #2b93e6; }
.gtools .toggled { width: 20px; margin: 0 1px 0 2px; background: #a3d2f8; border: 1px solid #2b93e6; border-radius: 2px; }
.canvas { flex: 1; width: 100%; min-height: 0; display: block; }
.canvas text { font-family: "DejaVu Sans", sans-serif; font-size: 12px; fill: #1a1a1c; }
.gridline { fill: none; stroke: #95979b; stroke-width: 3; }
.edge { stroke: #111; stroke-width: 3; }
.edge.thin { stroke-width: 2; }
.edge.thin:not([fill]) { fill: none; }
.edge.heavy { fill: none; stroke-width: 5; stroke-dasharray: 9 1; }
.triad path { stroke-width: 2; }

.messages { height: 67px; }
.mtabs { display: flex; align-items: flex-end; height: 29px; padding: 5px 0 0 4px; border-bottom: 1px solid #cfd1d5; font-size: 12px; }
.mtab { height: 23px; padding: 0 5px; margin-right: 8px; background: #ebebec; gap: 5px; white-space: nowrap; }
.mtab.on { height: 24px; margin-bottom: -1px; border: 1px solid #cfd1d5; border-bottom: 0; background: #fafbff; color: #2a5298; }
.grow { flex: 1; }
.hb { width: 15px; height: 20px; color: #4a4b4f; }
.mtools { display: flex; height: 28px; align-items: center; gap: 4px; padding-left: 4px; }
.mtools .tool { width: 20px; height: 20px; }
.pressed2 { background: #a3d2f8; border: 1px solid #2b93e6; border-radius: 2px; }
.hscroll { height: 5px; margin: 0 4px; border: 1px solid #cfd1d5; }
.hscroll div { height: 100%; width: 64%; margin-left: 3%; background: #e3e4e6; }

footer { height: 31px; padding: 11px 0 0 8px; text-align: center; }
.taskline { height: 2px; background: #17181b; padding-left: 48px; }
.taskline div { height: 2px; width: 288px; background: #dedfe2; }
</style>
